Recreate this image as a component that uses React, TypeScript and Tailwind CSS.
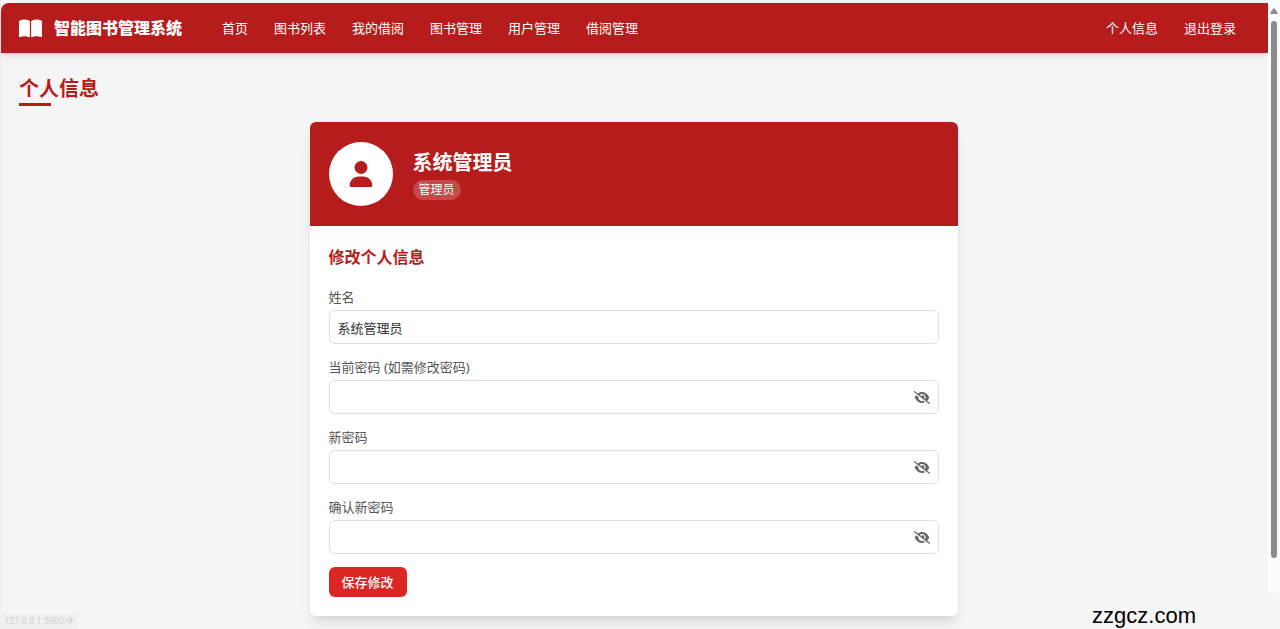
import { useState } from "react";
import type { ReactNode } from "react";
import { FaBookOpen, FaEye, FaEyeSlash, FaUser } from "react-icons/fa6";

const mainLinks = ["首页", "图书列表", "我的借阅", "图书管理", "用户管理", "借阅管理"];
const accountLinks = ["个人信息", "退出登录"];

function NavLink({ children }: { children: ReactNode }) {
  return (
    <a href="#" className="whitespace-nowrap text-[13px] leading-5 text-white hover:underline">
      {children}
    </a>
  );
}

function Navbar() {
  return (
    <header className="flex h-[50px] items-center justify-between rounded-tl-lg bg-[#b71c1c] pr-8 pl-[18px] shadow-md">
      <div className="flex items-center gap-10">
        <a href="#" className="flex items-center gap-3 text-base font-black text-white">
          <FaBookOpen className="size-[23px]" aria-hidden="true" />
          <span className="whitespace-nowrap">智能图书管理系统</span>
        </a>
        <nav className="flex items-center gap-[26px]">
          {mainLinks.map((label) => (
            <NavLink key={label}>{label}</NavLink>
          ))}
        </nav>
      </div>
      <nav className="flex items-center gap-[26px]">
        {accountLinks.map((label) => (
          <NavLink key={label}>{label}</NavLink>
        ))}
      </nav>
    </header>
  );
}

const inputClass =
  "h-[34px] w-full rounded-md border border-[#e0e0e0] bg-white px-2 text-[13px] leading-5 text-[#333] outline-none focus:border-[#b71c1c]";
const labelClass = "mb-[3px] block text-[13px] leading-5 text-[#555]";

function PasswordField({ id, label }: { id: string; label: string }) {
  const [visible, setVisible] = useState(false);
  return (
    <div>
      <label htmlFor={id} className={labelClass}>
        {label}
      </label>
      <div className="relative">
        <input id={id} type={visible ? "text" : "password"} className={inputClass} />
        <button
          type="button"
          aria-label={visible ? "隐藏密码" : "显示密码"}
          onClick={() => setVisible(!visible)}
          className="absolute inset-y-0 right-[9px] flex items-center text-[#666]"
        >
          {visible ? <FaEye className="h-[13px] w-4" /> : <FaEyeSlash className="h-[13px] w-4" />}
        </button>
      </div>
    </div>
  );
}

function ProfileCard() {
  return (
    <section className="mx-auto mt-4 w-full max-w-[648px] overflow-hidden rounded-md bg-white shadow-lg">
      <div className="flex items-center gap-5 bg-[#b71c1c] px-[19px] py-5">
        <div className="flex size-16 shrink-0 items-center justify-center rounded-full bg-white text-[#b71c1c]">
          <FaUser className="size-[26px]" aria-hidden="true" />
        </div>
        <div>
          <h2 className="text-xl leading-7 font-bold text-white">系统管理员</h2>
          <span className="mt-[3px] block w-fit rounded-full bg-white/20 px-[6px] text-xs leading-5 text-white">
            管理员
          </span>
        </div>
      </div>
      <form className="p-[19px]" onSubmit={(event) => event.preventDefault()}>
        <h3 className="mb-[18px] text-base leading-6 font-bold text-[#b71c1c]">修改个人信息</h3>
        <div className="flex flex-col gap-[13px]">
          <div>
            <label htmlFor="name" className={labelClass}>
              姓名
            </label>
            <input id="name" type="text" defaultValue="系统管理员" className={inputClass} />
          </div>
          <PasswordField id="current-password" label="当前密码 (如需修改密码)" />
          <PasswordField id="new-password" label="新密码" />
          <PasswordField id="confirm-password" label="确认新密码" />
          <button
            type="submit"
            className="h-[30px] self-start rounded-md bg-[#dc2626] px-[13px] text-[13px] leading-5 font-medium text-white"
          >
            保存修改
          </button>
        </div>
      </form>
    </section>
  );
}

function ScrollRail() {
  return (
    <div className="flex w-3 shrink-0 flex-col items-center pb-9" aria-hidden="true">
      <div className="flex w-full flex-1 flex-col items-center bg-[#fcfcfc] pt-2 pb-[35px]">
        <svg viewBox="0 0 8 6" className="h-[6px] w-2 fill-[#8b8b8b]">
          <path d="M3.3.5 Q4-.2 4.7.5 L7.8 5 Q8 6 7 6 H1 Q0 6 .2 5 Z" />
        </svg>
        <div className="mt-[7px] w-[6px] flex-1 rounded-full bg-[#8b8b8b]" />
      </div>
    </div>
  );
}

export default function App() {
  return (
    <div className="relative flex min-h-screen bg-[#f5f5f5] font-['Noto_Sans','Noto_Sans_CJK_SC',sans-serif]">
      <div className="flex min-w-0 flex-1 flex-col border-l border-[#ececec] pt-[3px]">
        <Navbar />
        <main className="pt-[22px] pr-5 pb-3 pl-[18px]">
          <h1 className="text-xl leading-7 font-bold text-[#b71c1c]">个人信息</h1>
          <div className="h-[3px] w-8 bg-[#b71c1c]" />
          <ProfileCard />
        </main>
      </div>
      <ScrollRail />
      <div className="absolute bottom-0 left-0 bg-[#f0f0f0] px-1 font-['Roboto',sans-serif] text-[9px] leading-4 text-[#d0d0d0]">
        127.0.0.1:5000/#
      </div>
      <div className="absolute right-[84px] bottom-0 font-['Liberation_Sans',sans-serif] text-[22px] leading-[26px] text-black">
        zzgcz.com
      </div>
    </div>
  );
}
